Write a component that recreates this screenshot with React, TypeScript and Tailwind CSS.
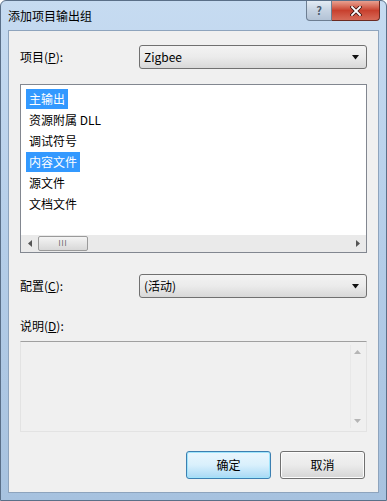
const font = { fontFamily: '"Noto Sans CJK SC", "Noto Sans", sans-serif' };

const items = [
  { label: "主输出", selected: true },
  { label: "资源附属 DLL", selected: false },
  { label: "调试符号", selected: false },
  { label: "内容文件", selected: true },
  { label: "源文件", selected: false },
  { label: "文档文件", selected: false },
];

function ComboBox({ value }: { value: string }) {
  return (
    <div className="flex h-[24px] w-[228px] items-center justify-between rounded-[3px] border border-[#707070] bg-gradient-to-b from-[#f3f3f3] via-[#ebebeb] to-[#d8d8d8] pl-[4px] pr-[6px] text-[12px] text-black">
      <span className="leading-none">{value}</span>
      <svg width="8" height="5" viewBox="0 0 8 5">
        <path d="M0 0h7L3.5 4.5z" fill="#111" />
      </svg>
    </div>
  );
}

function Label({ text, hot }: { text: string; hot: string }) {
  return (
    <span className="text-[12px] leading-none text-black">
      {text}(<span className="underline">{hot}</span>):
    </span>
  );
}

export default function App() {
  return (
    <div
      className="flex h-[501px] w-[387px] flex-col overflow-hidden rounded-t-[6px] border border-[#5a6f88] bg-gradient-to-b from-[#c6dbf1] via-[#b4cde8] to-[#a7c2df]"
      style={font}
    >
      {/* title bar */}
      <div className="flex h-[29px] items-start justify-between">
        <span className="pl-[7px] pt-[7px] text-[12px] leading-[16px] text-black">添加项目输出组</span>
        <div className="mr-[6px] flex">
          <div className="flex h-[20px] w-[26px] items-center justify-center rounded-bl-[4px] border border-t-0 border-[#6d7e92] bg-gradient-to-b from-[#e3ebf4] via-[#c6d3e2] to-[#b3c3d6] text-[11px] font-bold text-[#4a5a6c]">
            ?
          </div>
          <div className="flex h-[20px] w-[48px] items-center justify-center rounded-br-[4px] border border-l-0 border-t-0 border-[#6b2a22] bg-gradient-to-b from-[#e8a090] via-[#c8402e] to-[#d66a58]">
            <svg width="12" height="10" viewBox="0 0 12 10">
              <path d="M2 1l8 8M10 1l-8 8" stroke="#3a1410" strokeWidth="3.4" strokeLinecap="square" />
              <path d="M2 1l8 8M10 1l-8 8" stroke="#ffffff" strokeWidth="1.8" strokeLinecap="square" />
            </svg>
          </div>
        </div>
      </div>

      {/* client area */}
      <div className="mx-[7px] mb-[7px] flex flex-1 flex-col border border-[#8ea4bd] bg-[#f0f0f0] px-[11px] pt-[14px]">
        <div className="flex h-[24px] items-center justify-between">
          <Label text="项目" hot="P" />
          <ComboBox value="Zigbee" />
        </div>

        {/* list box */}
        <div className="mt-[15px] flex h-[169px] w-[347px] flex-col border border-[#828790] bg-white">
          <div className="flex flex-1 flex-col pl-[5px] pt-[3px]">
            {items.map((it) => (
              <div key={it.label} className="flex h-[21px] items-center">
                <span
                  className={
                    it.selected
                      ? "bg-[#3399ff] px-[3px] py-[2px] text-[12px] leading-[16px] text-white"
                      : "px-[3px] py-[2px] text-[12px] leading-[16px] text-black"
                  }
                >
                  {it.label}
                </span>
              </div>
            ))}
          </div>
          {/* horizontal scrollbar */}
          <div className="flex h-[17px] items-center bg-[#eaeaea]">
            <div className="flex w-[17px] justify-center">
              <svg width="4" height="7" viewBox="0 0 4 7">
                <path d="M4 0v7L0 3.5z" fill="#555" />
              </svg>
            </div>
            <div className="flex h-[15px] w-[50px] items-center justify-center rounded-[2px] border border-[#9a9a9a] bg-gradient-to-b from-[#f4f4f4] to-[#d8d8d8]">
              <span className="text-[7px] leading-none tracking-[1px] text-[#555]">III</span>
            </div>
            <div className="flex-1" />
            <div className="flex w-[17px] justify-center">
              <svg width="4" height="7" viewBox="0 0 4 7">
                <path d="M0 0v7L4 3.5z" fill="#555" />
              </svg>
            </div>
          </div>
        </div>

        <div className="mt-[21px] flex h-[24px] items-center justify-between">
          <Label text="配置" hot="C" />
          <ComboBox value="(活动)" />
        </div>

        <div className="mt-[21px] flex h-[14px] items-center">
          <Label text="说明" hot="D" />
        </div>

        {/* description */}
        <div className="mt-[8px] flex h-[91px] w-[347px] border border-t-[#a0a0a0] border-b-[#e3e3e3] border-l-[#e3e3e3] border-r-[#e3e3e3] bg-[#f0f0f0]">
          <div className="flex-1" />
          <div className="my-[3px] mr-[2px] flex w-[14px] flex-col items-center justify-between border-l border-[#e8e8e8] bg-[#f0f0f0] py-[5px]">
            <svg width="7" height="4" viewBox="0 0 7 4">
              <path d="M0 4h7L3.5 0z" fill="#b5b5b5" />
            </svg>
            <svg width="7" height="4" viewBox="0 0 7 4">
              <path d="M0 0h7L3.5 4z" fill="#b5b5b5" />
            </svg>
          </div>
        </div>

        <div className="mt-[19px] flex justify-end gap-[9px] pr-[2px]">
          <button className="flex h-[28px] w-[85px] items-center justify-center rounded-[3px] border border-[#3c7fb1] bg-gradient-to-b from-[#eaf6fd] via-[#d9f0fc] to-[#a7d9f5] text-[12px] text-black shadow-[inset_0_0_0_1px_#9fe4fb]">
            确定
          </button>
          <button className="flex h-[28px] w-[85px] items-center justify-center rounded-[3px] border border-[#707070] bg-gradient-to-b from-[#f2f2f2] via-[#ebebeb] to-[#d5d5d5] text-[12px] text-black shadow-[inset_0_0_0_1px_#fcfcfc]">
            取消
          </button>
        </div>
      </div>
    </div>
  );
}
